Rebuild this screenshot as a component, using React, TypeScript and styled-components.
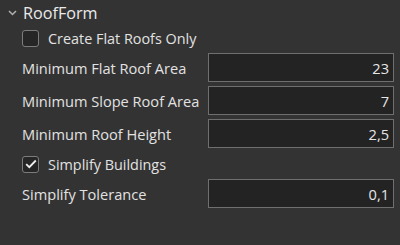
import styled, { createGlobalStyle } from "styled-components";

const GlobalStyle = createGlobalStyle`
  html, body {
    margin: 0;
    padding: 0;
    background: #333333;
  }
  body {
    width: 400px;
    height: 245px;
    overflow: hidden;
    font-family: "Open Sans", "Noto Sans", sans-serif;
    color: #e2e2e2;
  }
`;

const Panel = styled.div`
  width: 400px;
  height: 245px;
  background: #333333;
  display: flex;
  flex-direction: column;
  box-sizing: border-box;
`;

const Header = styled.div`
  height: 25px;
  display: flex;
  align-items: center;
  gap: 6px;
  padding-left: 8px;
  font-size: 16.2px;
  color: #eaeaea;
`;

const Body = styled.div`
  display: flex;
  flex-direction: column;
  padding: 0 6px 0 22px;
`;

type RowProps = {
  top?: number;
};

const CheckRow = styled.label`
  height: 26px;
  display: flex;
  align-items: center;
  gap: 9px;
  font-size: 14.4px;
  margin-top: ${(props: RowProps) => props.top ?? 0}px;
`;

const Box = styled.span`
  width: 17px;
  height: 17px;
  box-sizing: border-box;
  border: 1.5px solid #7c7c7c;
  border-radius: 3px;
  background: #262626;
  display: flex;
  align-items: center;
  justify-content: center;
`;

const FieldRow = styled.div`
  height: 29px;
  display: grid;
  grid-template-columns: 186px 186px;
  align-items: center;
  margin-top: ${(props: RowProps) => props.top ?? 0}px;
  font-size: 14.6px;
`;

const Input = styled.div`
  height: 29px;
  box-sizing: border-box;
  border: 1.5px solid #6f6f6f;
  background: #232323;
  display: flex;
  align-items: center;
  justify-content: flex-end;
  padding-right: 4px;
  font-size: 14.6px;
  color: #e6e6e6;
`;

const Chevron = () => (
  <svg width="9" height="6" viewBox="0 0 9 6">
    <path d="M1 1 L4.5 4.5 L8 1" fill="none" stroke="#b0b0b0" strokeWidth="1.5" />
  </svg>
);

const Check = () => (
  <svg width="12" height="10" viewBox="0 0 12 10">
    <path d="M1.2 5.2 L4.3 8.2 L10.8 1.5" fill="none" stroke="#f0f0f0" strokeWidth="1.8" />
  </svg>
);

type CheckProps = { checked: boolean; text: string; top?: number };

const CheckItem = (props: CheckProps) => (
  <CheckRow top={props.top}>
    <Box>{props.checked && <Check />}</Box>
    <span>{props.text}</span>
  </CheckRow>
);

type FieldProps = { label: string; value: string; top?: number };

const Field = (props: FieldProps) => (
  <FieldRow top={props.top}>
    <span>{props.label}</span>
    <Input>{props.value}</Input>
  </FieldRow>
);

const App = () => {
  return (
    <>
      <GlobalStyle />
      <Panel>
        <Header>
          <Chevron />
          <span>RoofForm</span>
        </Header>
        <Body>
          <CheckItem checked={false} text="Create Flat Roofs Only" />
          <Field label="Minimum Flat Roof Area" value="23" top={2} />
          <Field label="Minimum Slope Roof Area" value="7" top={4} />
          <Field label="Minimum Roof Height" value="2,5" top={4} />
          <CheckItem checked={true} text="Simplify Buildings" top={3} />
          <Field label="Simplify Tolerance" value="0,1" top={2} />
        </Body>
      </Panel>
    </>
  );
};

export default App;
